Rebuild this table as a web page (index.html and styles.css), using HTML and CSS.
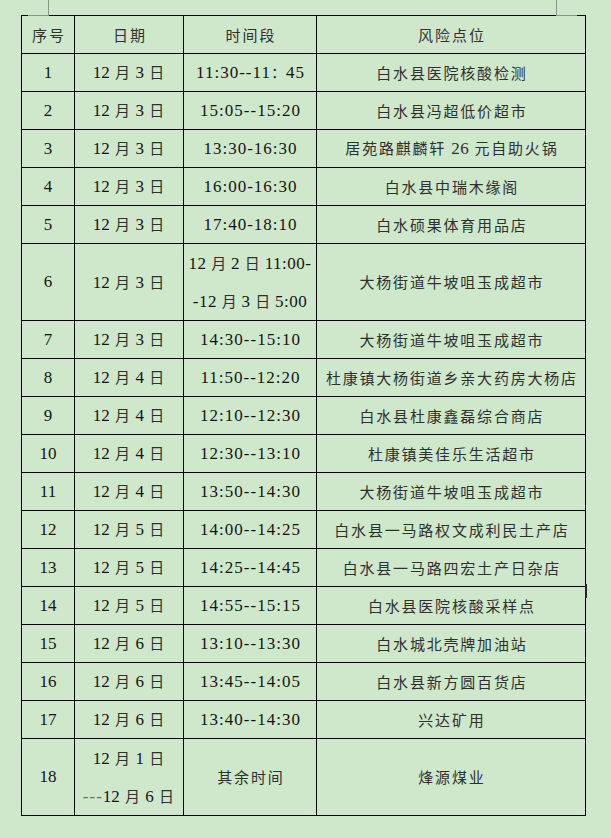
FILE: index.html
```html
<!DOCTYPE html>
<html lang="zh-CN">
<head>
<meta charset="utf-8">
<title>风险点位</title>
<link rel="stylesheet" href="styles.css">
</head>
<body>
<div class="page">
  <span class="mark mark-tl"></span>
  <span class="mark mark-tr"></span>
  <span class="tick"></span>
  <table class="risk">
    <colgroup>
      <col class="c-no"><col class="c-date"><col class="c-time"><col class="c-place">
    </colgroup>
    <thead>
      <tr><th>序号</th><th>日期</th><th>时间段</th><th>风险点位</th></tr>
    </thead>
    <tbody>
      <tr><td class="no">1</td><td class="date">12 <span class="k">月</span> 3 <span class="k">日</span></td><td class="time">11:30--11<span class="k">：</span>45</td><td class="place">白水县医院核酸检测</td></tr>
      <tr><td class="no">2</td><td class="date">12 <span class="k">月</span> 3 <span class="k">日</span></td><td class="time">15:05--15:20</td><td class="place">白水县冯超低价超市</td></tr>
      <tr><td class="no">3</td><td class="date">12 <span class="k">月</span> 3 <span class="k">日</span></td><td class="time">13:30-16:30</td><td class="place">居苑路麒麟轩 <span class="n">26</span> 元自助火锅</td></tr>
      <tr><td class="no">4</td><td class="date">12 <span class="k">月</span> 3 <span class="k">日</span></td><td class="time">16:00-16:30</td><td class="place">白水县中瑞木缘阁</td></tr>
      <tr><td class="no">5</td><td class="date">12 <span class="k">月</span> 3 <span class="k">日</span></td><td class="time">17:40-18:10</td><td class="place">白水硕果体育用品店</td></tr>
      <tr class="tall"><td class="no">6</td><td class="date">12 <span class="k">月</span> 3 <span class="k">日</span></td><td class="time two">12 <span class="k">月</span> 2 <span class="k">日</span> 11:00-<br>-12 <span class="k">月</span> 3 <span class="k">日</span> 5:00</td><td class="place">大杨街道牛坡咀玉成超市</td></tr>
      <tr><td class="no">7</td><td class="date">12 <span class="k">月</span> 3 <span class="k">日</span></td><td class="time">14:30--15:10</td><td class="place">大杨街道牛坡咀玉成超市</td></tr>
      <tr><td class="no">8</td><td class="date">12 <span class="k">月</span> 4 <span class="k">日</span></td><td class="time">11:50--12:20</td><td class="place">杜康镇大杨街道乡亲大药房大杨店</td></tr>
      <tr><td class="no">9</td><td class="date">12 <span class="k">月</span> 4 <span class="k">日</span></td><td class="time">12:10--12:30</td><td class="place">白水县杜康鑫磊综合商店</td></tr>
      <tr><td class="no">10</td><td class="date">12 <span class="k">月</span> 4 <span class="k">日</span></td><td class="time">12:30--13:10</td><td class="place">杜康镇美佳乐生活超市</td></tr>
      <tr><td class="no">11</td><td class="date">12 <span class="k">月</span> 4 <span class="k">日</span></td><td class="time">13:50--14:30</td><td class="place">大杨街道牛坡咀玉成超市</td></tr>
      <tr><td class="no">12</td><td class="date">12 <span class="k">月</span> 5 <span class="k">日</span></td><td class="time">14:00--14:25</td><td class="place">白水县一马路权文成利民土产店</td></tr>
      <tr><td class="no">13</td><td class="date">12 <span class="k">月</span> 5 <span class="k">日</span></td><td class="time">14:25--14:45</td><td class="place">白水县一马路四宏土产日杂店</td></tr>
      <tr><td class="no">14</td><td class="date">12 <span class="k">月</span> 5 <span class="k">日</span></td><td class="time">14:55--15:15</td><td class="place">白水县医院核酸采样点</td></tr>
      <tr><td class="no">15</td><td class="date">12 <span class="k">月</span> 6 <span class="k">日</span></td><td class="time">13:10--13:30</td><td class="place">白水城北壳牌加油站</td></tr>
      <tr><td class="no">16</td><td class="date">12 <span class="k">月</span> 6 <span class="k">日</span></td><td class="time">13:45--14:05</td><td class="place">白水县新方圆百货店</td></tr>
      <tr><td class="no">17</td><td class="date">12 <span class="k">月</span> 6 <span class="k">日</span></td><td class="time">13:40--14:30</td><td class="place">兴达矿用</td></tr>
      <tr class="tall"><td class="no">18</td><td class="date two">12 <span class="k">月</span> 1 <span class="k">日</span><br><span class="dash">---</span>12 <span class="k">月</span> 6 <span class="k">日</span></td><td class="place">其余时间</td><td class="place">烽源煤业</td></tr>
    </tbody>
  </table>
</div>
</body>
</html>
```

FILE: styles.css
```css
html, body {
  margin: 0;
  padding: 0;
  background: #cfe8cc;
}

body {
  font-family: "Liberation Serif", "Noto Sans CJK SC", serif;
  color: #141414;
}

.page {
  position: relative;
  width: 611px;
  height: 838px;
  box-sizing: border-box;
  padding: 15px 0 0 21px;
  overflow: hidden;
}

/* page-margin corner marks drawn over the canvas */
.mark {
  position: absolute;
  top: 0;
  width: 20px;
  height: 15px;
  border-bottom: 1px solid #8a948a;
}
.mark-tl {
  left: 28px;
  border-right: 1px solid #8a948a;
}
.mark-tr {
  left: 556px;
  border-left: 1px solid #8a948a;
}
.tick {
  position: absolute;
  left: 585px;
  top: 584px;
  width: 2px;
  height: 14px;
  background: #2b1d3a;
}

.risk {
  border-collapse: collapse;
  table-layout: fixed;
  width: 564px;
}

.c-no { width: 53px; }
.c-date { width: 109px; }
.c-time { width: 133px; }
.c-place { width: 269px; }

.risk th,
.risk td {
  border: 1px solid #000;
  padding: 0;
  text-align: center;
  vertical-align: middle;
  white-space: nowrap;
}

.risk tr {
  height: 38px;
}

.risk tr.tall {
  height: 76px;
}

.risk th {
  font-family: "Noto Sans CJK SC", sans-serif;
  font-weight: normal;
  font-size: 15px;
  letter-spacing: 2px;
  text-indent: 2px;
  color: #303030;
  line-height: 20px;
}

.no,
.date,
.time {
  font-size: 17px;
  line-height: 20px;
}

.time {
  letter-spacing: 1px;
  text-indent: 1px;
}

.two {
  line-height: 37px;
}

.time.two {
  letter-spacing: 0.5px;
  text-indent: 0;
}

.k {
  font-family: "Noto Sans CJK SC", sans-serif;
  font-size: 15px;
  color: #303030;
  letter-spacing: 0;
}

.date .k {
  margin: 0 1px;
}

.dash {
  color: #6a6a6a;
  letter-spacing: 1px;
}

.place {
  font-family: "Noto Sans CJK SC", sans-serif;
  font-size: 15px;
  letter-spacing: 1.8px;
  text-indent: 1.8px;
  color: #303030;
  line-height: 20px;
}

.place .n {
  font-family: "Liberation Serif", serif;
  font-size: 17px;
  letter-spacing: 0.5px;
}
```
